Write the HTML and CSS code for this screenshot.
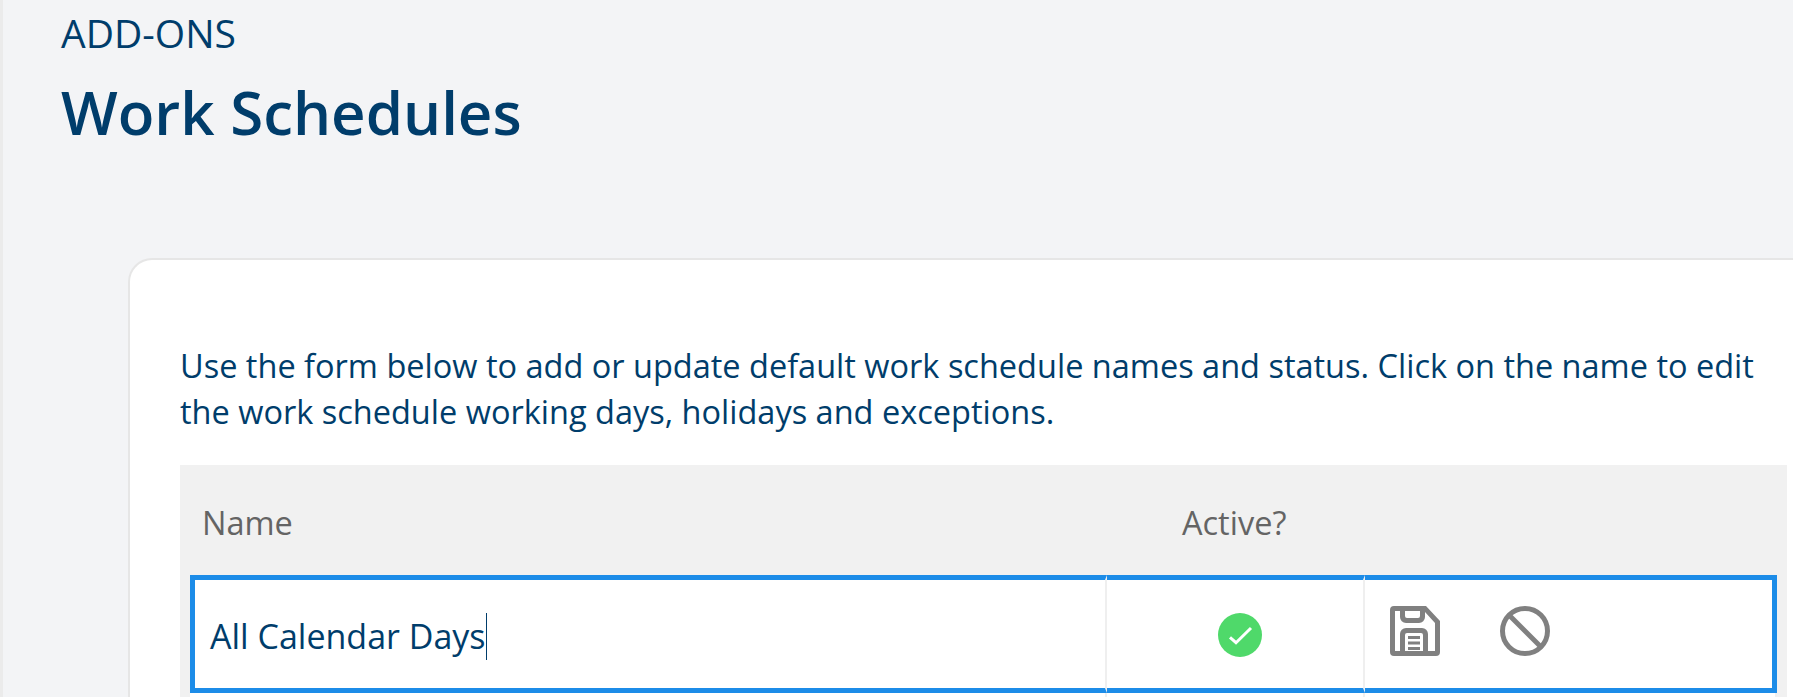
FILE: index.html
```html
<!DOCTYPE html>
<html lang="en">
<head>
<meta charset="utf-8">
<title>Work Schedules</title>
<link rel="stylesheet" href="styles.css">
</head>
<body>
<div class="shell">
  <header class="page-head">
    <div class="eyebrow">ADD-ONS</div>
    <h1 class="title">Work Schedules</h1>
  </header>
  <main class="card">
    <p class="intro">Use the form below to add or update default work schedule names and status. Click on the name to edit<br>the work schedule working days, holidays and exceptions.</p>
    <div class="table">
      <div class="thead">
        <div class="th th-name">Name</div>
        <div class="th th-active">Active?</div>
      </div>
      <div class="row edit-row">
        <div class="cell cell-name"><span class="value">All Calendar Days</span><span class="caret"></span></div>
        <div class="cell cell-active">
          <svg class="check" viewBox="0 0 44 44" aria-hidden="true"><circle cx="22" cy="22" r="22" fill="#4fd96a"/><path d="M12 24.300l6 5.400L33 15" fill="none" stroke="#fff" stroke-width="3"/></svg>
        </div>
        <div class="cell cell-actions">
          <svg class="action" viewBox="0 0 50 50" aria-hidden="true"><path fill="#808080" fill-rule="evenodd" d="M4 0H36L50 15V46a4 4 0 0 1-4 4H4a4 4 0 0 1-4-4V4a4 4 0 0 1 4-4ZM5 5V45H10V28a6 6 0 0 1 6-6H32a6 6 0 0 1 6 6V45H45V17L35 6V11a6 6 0 0 1-6 6H16a6 6 0 0 1-6-6V5ZM15 5V10a2 2 0 0 0 2 2H28a2 2 0 0 0 2-2V5ZM15 45H33V29a2 2 0 0 0-2-2H17a2 2 0 0 0-2 2ZM18 30H30V33H18ZM18 35.500H30V38.500H18ZM18 41H30V44H18Z"/></svg>
          <svg class="action" viewBox="0 0 50 50" aria-hidden="true"><circle cx="25" cy="25" r="22.500" fill="none" stroke="#808080" stroke-width="5"/><path d="M10 10L40 40" stroke="#808080" stroke-width="5"/></svg>
        </div>
      </div>
      <div class="row next-row">
        <div class="cell"></div>
        <div class="cell"></div>
        <div class="cell"></div>
      </div>
    </div>
  </main>
</div>
</body>
</html>
```
FILE: styles.css
```css
* { box-sizing: border-box; }
html, body { margin: 0; height: 100%; overflow: hidden; }
body {
  background: #f3f4f6;
  font-family: "Open Sans", "Noto Sans", sans-serif;
  color: #003d6b;
}
.shell {
  height: 697px;
  overflow: hidden;
  padding-left: 58px;
  border-left: 3px solid #ebebeb;
}
.page-head { height: 258px; padding-top: 7px; }
.eyebrow { font-size: 39px; line-height: 52px; }
.title { margin: 12px 0 0; font-size: 60px; line-height: 82px; font-weight: 600; }
.card {
  margin-left: 67px;
  margin-right: -20px;
  height: 439px;
  background: #fff;
  border: 2px solid #e6e6e6;
  border-bottom: 0;
  border-right: 0;
  border-radius: 24px 0 0 0;
  padding: 83px 0 0 50px;
}
.intro { margin: 0; width: 1640px; font-size: 32.5px; line-height: 45.500px; }
.table { margin-top: 31px; width: 1607px; background: #f1f1f1; padding: 0 10px; }
.thead { height: 110px; display: flex; align-items: center; padding-top: 5px; color: #646464; font-size: 32.5px; }
.th { padding: 0 12px; }
.th-name { width: 980px; }
.row {
  display: grid;
  grid-template-columns: 917px 258px 412px;
}
.cell { display: flex; align-items: center; background: #fff; border-right: 2px solid #efefef; }
.edit-row { height: 118px; }
.edit-row .cell { border-top: 5px solid #1c8ce8; border-bottom: 5px solid #1c8ce8; }
.next-row { height: 60px; }
.edit-row .cell-name { border-left: 5px solid #1c8ce8; padding-left: 15px; padding-top: 4px; font-size: 34px; }
.caret { width: 1px; height: 47px; background: #003d6b; }
.cell-active { justify-content: center; padding-left: 10px; padding-top: 2px; }
.check { width: 44px; height: 44px; }
.edit-row .cell-actions { border-right: 5px solid #1c8ce8; padding-left: 25px; padding-bottom: 6px; gap: 60px; }
.action { width: 50px; height: 50px; }
```
